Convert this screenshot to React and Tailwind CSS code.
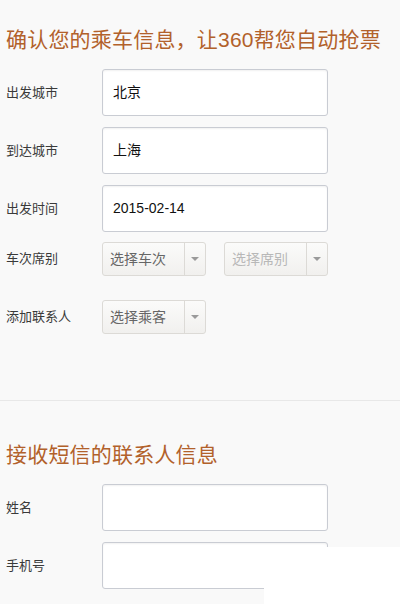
import React from "react";

const font = { fontFamily: '"Liberation Sans", "Noto Sans CJK SC", sans-serif' };

const TextRow = ({ label, value, className = "" }) => (
    <div className={`flex items-center ${className}`}>
        <div className="w-[96px] shrink-0 text-[13px] text-[#3a3a3a]">{label}</div>
        <div className="w-[226px] h-[47px] flex items-center px-[10px] bg-white border border-[#c9ccd3] rounded-[3px] shadow-[inset_0_1px_2px_rgba(0,0,0,0.06)] text-[14px] text-[#111]">
            {value}
        </div>
    </div>
);

const Select = ({ text, disabled }) => (
    <div className="w-[104px] h-[34px] flex border border-[#dcdad6] rounded-[3px] bg-gradient-to-b from-[#fbfbfa] to-[#f1f0ee]">
        <div className={`flex-1 flex items-center pl-[7px] text-[14px] ${disabled ? "text-[#b8b8b8]" : "text-[#666]"}`}>{text}</div>
        <div className="w-[21px] flex items-center justify-center border-l border-[#dcdad6]">
            <div className="w-0 h-0 border-l-[4px] border-r-[4px] border-t-[4px] border-l-transparent border-r-transparent border-t-[#9a9a9a]" />
        </div>
    </div>
);

const App = () => {
    return (
        <div className="relative w-[400px] h-[604px] overflow-hidden bg-[#f9f9f9]" style={font}>
            <div className="pl-[6px]">
                <h2 className="pt-[28px] text-[21px] leading-[24px] text-[#b2612b] tracking-[0.2px] whitespace-nowrap">确认您的乘车信息，让360帮您自动抢票</h2>

                <TextRow label="出发城市" value="北京" className="mt-[17px]" />
                <TextRow label="到达城市" value="上海" className="mt-[11px]" />
                <TextRow label="出发时间" value="2015-02-14" className="mt-[11px]" />

                <div className="flex items-center mt-[10px]">
                    <div className="w-[96px] shrink-0 text-[13px] text-[#3a3a3a]">车次席别</div>
                    <Select text="选择车次" />
                    <div className="w-[18px]" />
                    <Select text="选择席别" disabled />
                </div>

                <div className="flex items-center mt-[24px]">
                    <div className="w-[96px] shrink-0 text-[13px] text-[#3a3a3a]">添加联系人</div>
                    <Select text="选择乘客" />
                </div>
            </div>

            <div className="mt-[66px] border-t border-[#e8e8e8]" />

            <div className="pl-[6px]">
                <h2 className="pt-[42px] text-[21px] leading-[24px] text-[#b2612b] tracking-[0.2px]">接收短信的联系人信息</h2>
                <TextRow label="姓名" value="" className="mt-[17px]" />
                <TextRow label="手机号" value="" className="mt-[11px]" />
            </div>

            <div className="absolute left-[264px] top-[547px] right-0 bottom-0 bg-white" />
        </div>
    );
};

export default App;
